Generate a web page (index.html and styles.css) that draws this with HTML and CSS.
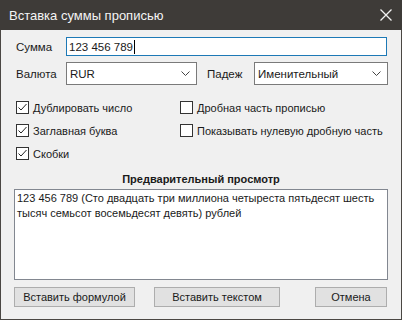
FILE: index.html
```html
<!DOCTYPE html>
<html lang="ru">
<head>
    <meta charset="UTF-8">
    <title>Вставка суммы прописью</title>
    <link rel="stylesheet" href="styles.css">
</head>
<body>
    <div class="window">
        <div class="titlebar">
            <span class="title">Вставка суммы прописью</span>
            <svg class="close" width="12" height="12" viewBox="0 0 12 12">
                <path d="M0.5 0.5 L11.5 11.5 M11.5 0.5 L0.5 11.5" stroke="#f2f2f2" stroke-width="1.3" fill="none"/>
            </svg>
        </div>

        <div class="content">
            <!-- Сумма -->
            <div class="row row-sum">
                <span class="label">Сумма</span>
                <div class="field focused">123 456 789<span class="caret"></span></div>
            </div>

            <!-- Валюта / Падеж -->
            <div class="row row-select">
                <span class="label">Валюта</span>
                <div class="select sel-currency">
                    <span>RUR</span>
                    <svg class="chevron" width="9" height="5" viewBox="0 0 9 5"><path d="M0.5 0.5 L4.5 4.5 L8.5 0.5" stroke="#444" fill="none"/></svg>
                </div>
                <span class="label case-label">Падеж</span>
                <div class="select sel-case">
                    <span>Именительный</span>
                    <svg class="chevron" width="9" height="5" viewBox="0 0 9 5"><path d="M0.5 0.5 L4.5 4.5 L8.5 0.5" stroke="#444" fill="none"/></svg>
                </div>
            </div>

            <!-- Options -->
            <div class="options">
                <div class="option"><span class="box checked"><svg width="11" height="11" viewBox="0 0 11 11"><path d="M1.5 5.5 L4 8 L9.5 2" stroke="#222" stroke-width="1" fill="none"/></svg></span>Дублировать число</div>
                <div class="option"><span class="box"></span>Дробная часть прописью</div>
                <div class="option"><span class="box checked"><svg width="11" height="11" viewBox="0 0 11 11"><path d="M1.5 5.5 L4 8 L9.5 2" stroke="#222" stroke-width="1" fill="none"/></svg></span>Заглавная буква</div>
                <div class="option"><span class="box"></span>Показывать нулевую дробную часть</div>
                <div class="option"><span class="box checked"><svg width="11" height="11" viewBox="0 0 11 11"><path d="M1.5 5.5 L4 8 L9.5 2" stroke="#222" stroke-width="1" fill="none"/></svg></span>Скобки</div>
            </div>

            <div class="preview-title">Предварительный просмотр</div>
            <div class="preview">123 456 789 (Сто двадцать три миллиона четыреста пятьдесят шесть тысяч семьсот восемьдесят девять) рублей</div>

            <div class="buttons">
                <div class="btn btn-formula">Вставить формулой</div>
                <div class="btn btn-text">Вставить текстом</div>
                <div class="btn btn-cancel">Отмена</div>
            </div>
        </div>
    </div>
</body>
</html>
```

FILE: styles.css
```css
* {
    box-sizing: border-box;
}

body {
    margin: 0;
    padding: 0;
    font-family: 'Liberation Sans', Arial, sans-serif;
    font-size: 11px;
    color: #1a1a1a;
    background: #fff;
}

.window {
    width: 402px;
    height: 320px;
    background-color: #f0f0f0;
    border: 1px solid #4a4743;
    border-top: none;
    display: flex;
    flex-direction: column;
}

.titlebar {
    height: 30px;
    background-color: #3e3b38;
    margin: 0 -1px;
    display: flex;
    align-items: center;
    justify-content: space-between;
    padding: 0 10px 0 9px;
}

.title {
    color: #f4f4f4;
    font-size: 13px;
}

.content {
    flex: 1;
    padding: 0 13px;
    display: flex;
    flex-direction: column;
}

.row {
    display: flex;
    align-items: center;
}

.label {
    padding-left: 2px;
    width: 52px;
    font-size: 11.5px;
}

.row-sum {
    margin-top: 7px;
    height: 19px;
}

.field {
    flex: 1;
    height: 19px;
    margin-right: 1px;
    background: #fff;
    border: 1px solid #7a7a7a;
    padding: 0 2px;
    font-size: 11.5px;
    display: flex;
    align-items: center;
}

.field.focused {
    border-color: #1d79b6;
}

.caret {
    display: inline-block;
    width: 1px;
    height: 14px;
    background: #000;
    margin-left: 1px;
}

.row-select {
    margin-top: 6px;
    height: 23px;
}

.select {
    height: 23px;
    background: #fff;
    border: 1px solid #7a7a7a;
    display: flex;
    align-items: center;
    justify-content: space-between;
    padding: 0 6px 0 3px;
    font-size: 11.5px;
}

.sel-currency {
    width: 131px;
}

.case-label {
    width: 47px;
    margin-left: 10px;
    padding-left: 0;
}

.sel-case {
    flex: 1;
}

.options {
    margin-top: 11px;
    display: grid;
    grid-template-columns: 164px 1fr;
    padding-left: 2px;
}

.option {
    height: 23px;
    display: flex;
    align-items: center;
    white-space: nowrap;
}

.box {
    width: 13px;
    height: 13px;
    border: 1px solid #333;
    background: #fff;
    margin-right: 4px;
    display: flex;
    align-items: center;
    justify-content: center;
}

.preview-title {
    margin-top: 6px;
    height: 16px;
    line-height: 16px;
    text-align: center;
    font-weight: bold;
}

.preview {
    margin-top: 2px;
    height: 91px;
    background: #fff;
    border: 1px solid #828790;
    padding: 1px 2px;
    line-height: 15px;
}

.buttons {
    margin-top: 7px;
    display: flex;
}

.btn {
    height: 20px;
    line-height: 18px;
    text-align: center;
    background: #e1e1e1;
    border: 1px solid #adadad;
}

.btn-formula {
    width: 121px;
}

.btn-text {
    width: 126px;
    margin-left: 19px;
}

.btn-cancel {
    width: 72px;
    margin-left: auto;
    margin-right: 1px;
}
```
